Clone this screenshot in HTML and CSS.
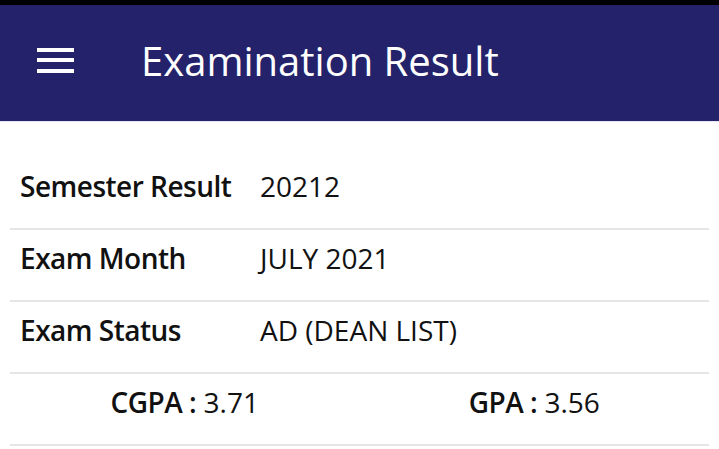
FILE: index.html
```html
<!DOCTYPE html>
<html lang="en">
<head>
<meta charset="utf-8">
<title>Examination Result</title>
<link rel="stylesheet" href="styles.css">
</head>
<body>
<div class="statusbar"></div>
<header class="appbar">
  <button class="menu" aria-label="Menu"><span></span><span></span><span></span></button>
  <h1 class="title">Examination Result</h1>
</header>
<main class="content">
  <div class="row"><span class="label">Semester Result</span><span class="value">20212</span></div>
  <div class="row"><span class="label">Exam Month</span><span class="value">JULY 2021</span></div>
  <div class="row"><span class="label">Exam Status</span><span class="value">AD (DEAN LIST)</span></div>
  <div class="row gpa">
    <div class="cell"><span class="label-inline">CGPA :</span> <span class="value">3.71</span></div>
    <div class="cell"><span class="label-inline">GPA :</span> <span class="value">3.56</span></div>
  </div>
</main>
</body>
</html>
```

FILE: styles.css
```css
html, body {
  margin: 0;
  padding: 0;
  background: #ffffff;
}
body {
  font-family: "Open Sans", "Noto Sans", sans-serif;
  color: #111111;
  width: 719px;
  height: 449px;
  overflow: hidden;
}
.statusbar {
  height: 5px;
  background: #000000;
}
.appbar {
  height: 116px;
  background: #23226a;
  display: flex;
  align-items: center;
  box-shadow: 0 1px 0 #e4e4f2;
}
.menu {
  margin-left: 37px;
  width: 37px;
  height: 25px;
  padding: 0;
  border: 0;
  background: transparent;
  display: flex;
  flex-direction: column;
  justify-content: space-between;
  margin-top: -6px;
}
.menu span {
  display: block;
  height: 4px;
  background: #ffffff;
  width: 100%;
}
.title {
  margin: 0 0 0 67px;
  font-size: 40px;
  font-weight: 400;
  color: #ffffff;
  line-height: 54px;
  margin-top: -4px;
}
.content {
  margin-top: 37px;
  padding: 0 10px;
}
.row {
  height: 72px;
  box-sizing: border-box;
  border-bottom: 2px solid #e6e6e6;
  padding: 9px 11px 0 10px;
  display: flex;
  align-items: flex-start;
  font-size: 28px;
  line-height: 38px;
}
.label {
  width: 240px;
  font-weight: 600;
  letter-spacing: -0.5px;
}
.value {
  font-weight: 400;
}
.gpa {
  padding-left: 0;
  padding-right: 0;
}
.cell {
  flex: 1;
  text-align: center;
}
.label-inline {
  font-weight: 600;
  letter-spacing: -0.5px;
}
```
